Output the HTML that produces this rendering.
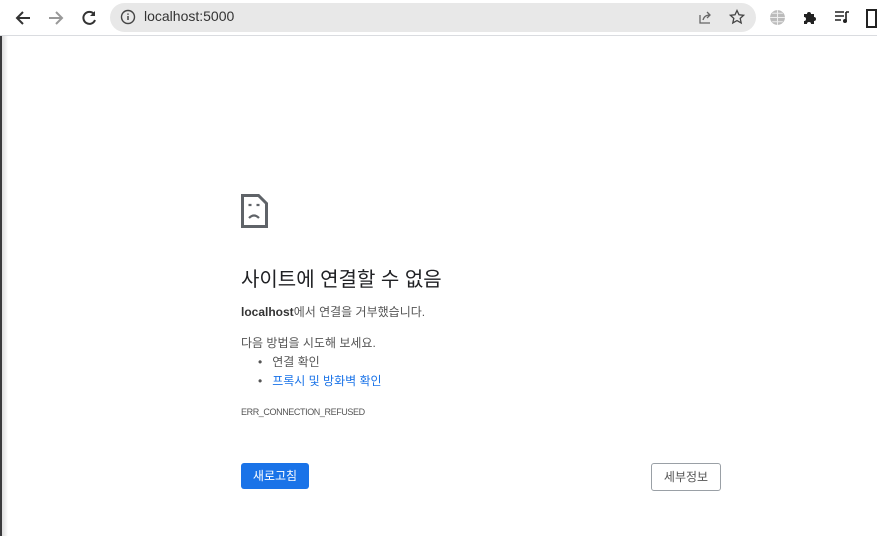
<!DOCTYPE html>
<html><head><meta charset="utf-8"><style>
body{margin:0;width:877px;height:536px;overflow:hidden;background:#fff;font-family:"Liberation Sans","Noto Sans CJK KR",sans-serif;position:relative}
.bar{position:absolute;left:0;top:0;width:877px;height:35px;background:#fff;border-bottom:1px solid #dadce0}
.omni{position:absolute;left:110px;top:3px;width:646px;height:29px;background:#e8e8e8;border-radius:15px}
.abs{position:absolute}
.edge{position:absolute;left:0;top:36px;width:2px;height:500px;background:#3a3a3c}
.edge2{position:absolute;left:2px;top:36px;width:6px;height:500px;background:linear-gradient(90deg,#ddd,#fff)}
.t{color:#333}
</style></head><body>
<div class="bar">
<svg class="abs" style="left:14px;top:9px" width="18" height="18" viewBox="0 0 18 18"><path d="M16 9H3M9 3L3 9l6 6" stroke="#333" stroke-width="2" fill="none"/></svg>
<svg class="abs" style="left:47px;top:9px" width="18" height="18" viewBox="0 0 18 18"><path d="M2 9h13M9 3l6 6-6 6" stroke="#999" stroke-width="2" fill="none"/></svg>
<svg class="abs" style="left:80px;top:9px" width="18" height="18" viewBox="0 0 18 18"><path d="M14 5A6 6 0 1 0 15 11" stroke="#333" stroke-width="2" fill="none"/><path d="M15 2v5h-5z" fill="#333"/></svg>
<div class="omni"></div>
<svg class="abs" style="left:120px;top:9px" width="16" height="16" viewBox="0 0 16 16"><circle cx="8" cy="8" r="6.5" stroke="#444" stroke-width="1.4" fill="none"/><path d="M8 7v4M8 4.5v1.2" stroke="#444" stroke-width="1.5"/></svg>
<div class="abs" style="left:144px;top:8px;font-size:14px;color:#333">localhost:5000</div>
<svg class="abs" style="left:698px;top:9px" width="16" height="16" viewBox="0 0 16 16"><path d="M2 6v8h10M5 11c1-4 4-5 7-5M9 3l3 3-3 3" stroke="#666" stroke-width="1.3" fill="none"/></svg>
<svg class="abs" style="left:729px;top:9px" width="16" height="16" viewBox="0 0 16 16"><path d="M8 1.5l2 4.3 4.6.5-3.4 3.1 1 4.6L8 11.6 3.8 14l1-4.6L1.4 6.3l4.6-.5z" stroke="#444" stroke-width="1.3" fill="none"/></svg>
<svg class="abs" style="left:769px;top:9px" width="17" height="17" viewBox="0 0 16 16"><circle cx="8" cy="8" r="7" fill="#bbb"/><path d="M1 8h14M8 1v14M3 4h10M3 12h10" stroke="#eee" stroke-width="1"/></svg>
<svg class="abs" style="left:802px;top:9px" width="16" height="16" viewBox="0 0 16 16"><path d="M2 5h3a2 2 0 1 1 4 0h3v3a2 2 0 1 1 0 4v3H9a2 2 0 1 0-4 0H2v-3a2 2 0 1 0 0-4z" fill="#222"/></svg>
<svg class="abs" style="left:834px;top:10px" width="16" height="14" viewBox="0 0 16 14"><path d="M1 2h9M1 6h9M1 10h6M12 2v10M12 2h3" stroke="#222" stroke-width="1.6" fill="none"/><circle cx="11" cy="11" r="2" fill="#222"/></svg>
<div class="abs" style="left:866px;top:9px;width:7px;height:15px;border:2px solid #222"></div>
</div>
<div class="edge"></div><div class="edge2"></div>
<svg class="abs" style="left:241px;top:194px" width="27" height="34" viewBox="0 0 27 34"><path d="M1.5 1.5h16l8 8v23h-24z" stroke="#5f6368" stroke-width="3" fill="none"/><path d="M7.5 11h3M15.5 11h3M8 24q5-5 10 0" stroke="#5f6368" stroke-width="2.2" fill="none"/></svg>
<div class="abs t" style="left:241px;top:263px;font-size:20px;color:#202124">사이트에 연결할 수 없음</div>
<div class="abs t" style="left:241px;top:303px;font-size:12px;color:#555"><b style="color:#333">localhost</b>에서 연결을 거부했습니다.</div>
<div class="abs" style="left:241px;top:334px;font-size:12px;color:#555">다음 방법을 시도해 보세요.</div>
<div class="abs" style="left:258px;top:353px;font-size:12px;color:#555">•&nbsp;&nbsp; 연결 확인</div>
<div class="abs" style="left:258px;top:372px;font-size:12px;color:#555">•&nbsp;&nbsp; <span style="color:#1a73e8">프록시 및 방화벽 확인</span></div>
<div class="abs" style="left:241px;top:407px;font-size:9px;color:#555;letter-spacing:-0.4px">ERR_CONNECTION_REFUSED</div>
<div class="abs" style="left:241px;top:463px;width:68px;height:26px;background:#1a73e8;border-radius:3px;color:#fff;font-size:12px;text-align:center;line-height:26px">새로고침</div>
<div class="abs" style="left:651px;top:463px;width:68px;height:26px;border:1px solid #9aa0a6;border-radius:3px;color:#555;font-size:12px;text-align:center;line-height:26px">세부정보</div>
</body></html>
